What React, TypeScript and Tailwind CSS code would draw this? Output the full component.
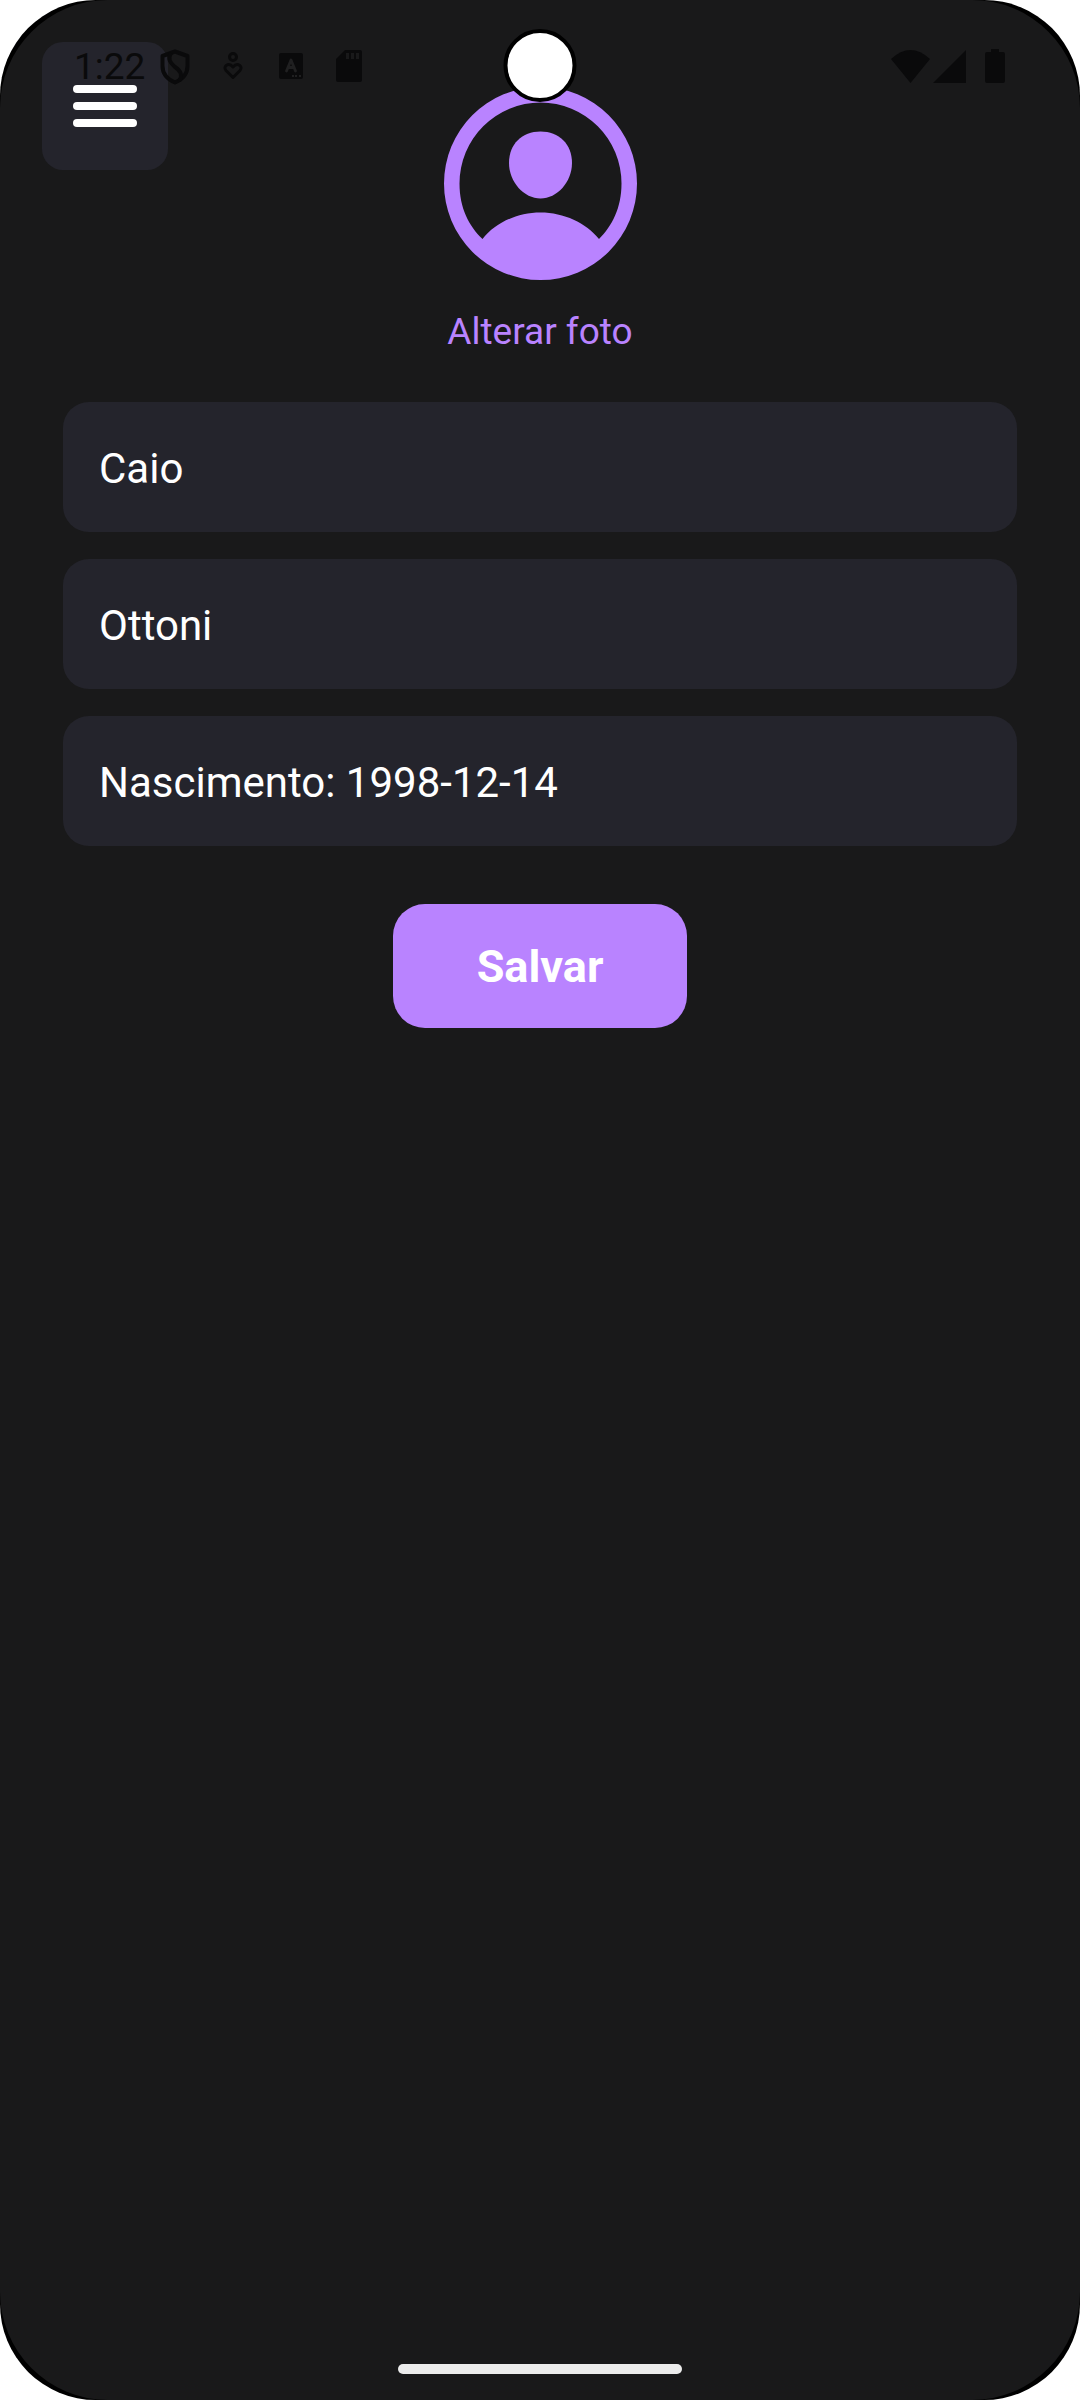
import React, { useState } from "react";

function StatusBar() {
  return (
    <div className="pointer-events-none absolute inset-x-0 top-0 z-20 flex h-[132px] items-center justify-between pr-[75px] pl-[74px] text-[#0a0a0b]">
      <div className="flex items-center">
        <span className="w-[86px] pt-[2px] text-[37px] leading-[44px]">1:22</span>
        <svg className="mt-[2px]" width="30" height="36" viewBox="0 0 30 36" fill="none" stroke="currentColor" strokeWidth="4" strokeLinejoin="round" aria-hidden="true">
          <path d="M15 2.500 27.500 7v10c0 8-5.500 13.500-12.500 16.500C8 30.500 2.500 25 2.500 17V7Z" />
          <path d="M11 4C7 11 11 14 15 18c6 4 8 8 4 14" />
        </svg>
        <svg className="ml-[33px]" width="20" height="28" viewBox="0 0 20 28" fill="none" stroke="currentColor" strokeWidth="3" aria-hidden="true">
          <circle cx="10" cy="5" r="3.500" />
          <path d="M10 25.500 3 18.500C-.5 14.500 5.500 9.500 10 15C14.500 9.500 20.500 14.500 17 18.500Z" strokeLinejoin="round" />
        </svg>
        <svg className="ml-[36px]" width="24" height="26" viewBox="0 0 24 26" aria-hidden="true">
          <rect width="24" height="26" rx="2" fill="currentColor" />
          <path d="m7.500 18 4.500-11 4.500 11M9 14.500h6" fill="none" stroke="#202021" strokeWidth="2.800" strokeLinecap="round" strokeLinejoin="round" />
          <path d="M13 23h2m1 0h2m2 0h2" stroke="#202021" strokeWidth="2" />
        </svg>
        <svg className="ml-[33px]" width="26" height="32" viewBox="0 0 26 32" aria-hidden="true">
          <path d="M9 0h15a2 2 0 0 1 2 2v28a2 2 0 0 1-2 2H2a2 2 0 0 1-2-2V9Z" fill="currentColor" />
          <path d="M10 3h3v6h-3zM15 3h3v6h-3zM20 3h3v6h-3z" fill="#19191a" />
        </svg>
      </div>
      <div className="flex items-center">
        <svg width="39" height="33" viewBox="0 0 39 33" fill="currentColor" aria-hidden="true">
          <path d="M0 9Q19.500-9 39 9L19.500 33Z" />
        </svg>
        <svg className="ml-[3px]" width="33" height="33" viewBox="0 0 33 33" fill="currentColor" aria-hidden="true">
          <path d="M33 0v33H0Z" />
        </svg>
        <svg className="ml-[19px]" width="20" height="34" viewBox="0 0 20 34" fill="currentColor" aria-hidden="true">
          <path d="M6 0h8v3h4a2 2 0 0 1 2 2v27a2 2 0 0 1-2 2H2a2 2 0 0 1-2-2V5a2 2 0 0 1 2-2h4Z" />
        </svg>
      </div>
    </div>
  );
}

function Avatar() {
  return (
    <svg width="193" height="193" viewBox="0 0 193 193" aria-hidden="true">
      <path
        fill="currentColor"
        fillRule="evenodd"
        d="M96.500 0a96.500 96.500 0 1 1 0 193a96.500 96.500 0 1 1 0-193ZM38.500 152C51 136 73 125.500 96.500 125.500S142 136 155 152C168 139 177.500 121 177.500 96.500a81 81 0 1 0-162 0C15.500 121 25 139 38.500 152Z"
      />
      <path fill="currentColor" d="M96.500 44.500C115 44.500 128 57 128 76C128 95 113 111.500 96.500 111.500S65 95 65 76C65 57 78 44.500 96.500 44.500Z" />
    </svg>
  );
}

const field =
  "w-full rounded-[26px] bg-[#24242c] px-[36px] pt-[42px] pb-[38px] text-left text-[42px] leading-[50px] text-white outline-none";

export default function App() {
  const [firstName, setFirstName] = useState("Caio");
  const [lastName, setLastName] = useState("Ottoni");

  return (
    <div className="bg-white font-['Roboto',sans-serif]">
      <div className="overflow-hidden rounded-[96px] bg-black">
        <div className="relative flex min-h-screen flex-col rounded-[108px] bg-[#19191a]">
          <StatusBar />
          <div className="absolute top-[29px] left-1/2 z-20 size-[73px] -translate-x-1/2 rounded-full border-4 border-black bg-white" />

          <button
            type="button"
            aria-label="Menu"
            className="absolute top-[42px] left-[42px] z-10 flex h-[128px] w-[126px] flex-col items-center justify-center gap-[9px] rounded-[21px] bg-[#24242c]"
          >
            <span className="h-2 w-16 rounded-full bg-white" />
            <span className="h-2 w-16 rounded-full bg-white" />
            <span className="h-2 w-16 rounded-full bg-white" />
          </button>

          <main className="flex flex-1 flex-col items-center px-[63px] pt-[87px]">
            <button type="button" className="flex flex-col items-center gap-[30px] text-[#b983ff]">
              <Avatar />
              <span className="text-[37px] leading-[44px]">Alterar foto</span>
            </button>

            <form className="mt-[48px] flex w-full flex-col items-center" onSubmit={(e) => e.preventDefault()}>
              <div className="flex w-full flex-col gap-[27px]">
                <input aria-label="Nome" className={field} value={firstName} onChange={(e) => setFirstName(e.target.value)} />
                <input aria-label="Sobrenome" className={field} value={lastName} onChange={(e) => setLastName(e.target.value)} />
                <button type="button" className={field}>
                  Nascimento: 1998-12-14
                </button>
              </div>
              <button
                type="submit"
                className="mt-[58px] rounded-[32px] bg-[#b983ff] px-[84px] pt-[36px] pb-[34px] text-[45px] leading-[54px] font-bold text-white"
              >
                Salvar
              </button>
            </form>
          </main>

          <footer className="flex justify-center pb-[26px]">
            <div className="h-[10px] w-[284px] rounded-full bg-[#ececec]" />
          </footer>
        </div>
      </div>
    </div>
  );
}
